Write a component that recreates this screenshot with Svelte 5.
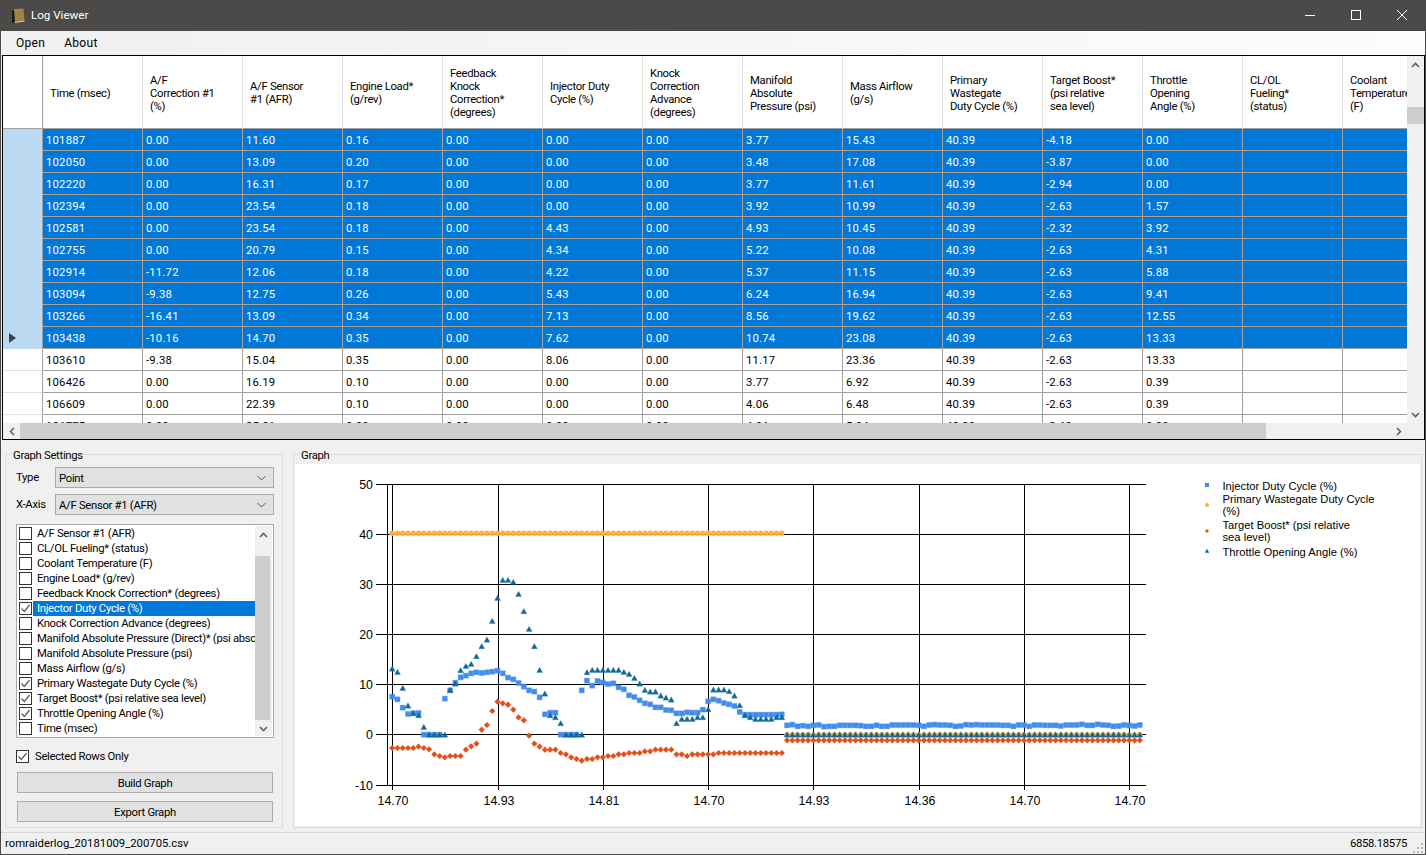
<script>
  const columns = [
    ['Time (msec)'],
    ['A/F', 'Correction #1', '(%)'],
    ['A/F Sensor', '#1 (AFR)'],
    ['Engine Load*', '(g/rev)'],
    ['Feedback', 'Knock', 'Correction*', '(degrees)'],
    ['Injector Duty', 'Cycle (%)'],
    ['Knock', 'Correction', 'Advance', '(degrees)'],
    ['Manifold', 'Absolute', 'Pressure (psi)'],
    ['Mass Airflow', '(g/s)'],
    ['Primary', 'Wastegate', 'Duty Cycle (%)'],
    ['Target Boost*', '(psi relative', 'sea level)'],
    ['Throttle', 'Opening', 'Angle (%)'],
    ['CL/OL', 'Fueling*', '(status)'],
    ['Coolant', 'Temperature', '(F)']
  ];
  const rows = [
    '101887 0.00 11.60 0.16 0.00 0.00 0.00 3.77 15.43 40.39 -4.18 0.00',
    '102050 0.00 13.09 0.20 0.00 0.00 0.00 3.48 17.08 40.39 -3.87 0.00',
    '102220 0.00 16.31 0.17 0.00 0.00 0.00 3.77 11.61 40.39 -2.94 0.00',
    '102394 0.00 23.54 0.18 0.00 0.00 0.00 3.92 10.99 40.39 -2.63 1.57',
    '102581 0.00 23.54 0.18 0.00 4.43 0.00 4.93 10.45 40.39 -2.32 3.92',
    '102755 0.00 20.79 0.15 0.00 4.34 0.00 5.22 10.08 40.39 -2.63 4.31',
    '102914 -11.72 12.06 0.18 0.00 4.22 0.00 5.37 11.15 40.39 -2.63 5.88',
    '103094 -9.38 12.75 0.26 0.00 5.43 0.00 6.24 16.94 40.39 -2.63 9.41',
    '103266 -16.41 13.09 0.34 0.00 7.13 0.00 8.56 19.62 40.39 -2.63 12.55',
    '103438 -10.16 14.70 0.35 0.00 7.62 0.00 10.74 23.08 40.39 -2.63 13.33',
    '103610 -9.38 15.04 0.35 0.00 8.06 0.00 11.17 23.36 40.39 -2.63 13.33',
    '106426 0.00 16.19 0.10 0.00 0.00 0.00 3.77 6.92 40.39 -2.63 0.39',
    '106609 0.00 22.39 0.10 0.00 0.00 0.00 4.06 6.48 40.39 -2.63 0.39',
    '106775 0.00 25.01 0.09 0.00 0.00 0.00 4.06 5.84 40.39 -2.63 0.39'
  ].map((r) => [...r.split(' '), '', '']);

  const listItems = [
    ['A/F Sensor #1 (AFR)', false],
    ['CL/OL Fueling* (status)', false],
    ['Coolant Temperature (F)', false],
    ['Engine Load* (g/rev)', false],
    ['Feedback Knock Correction* (degrees)', false],
    ['Injector Duty Cycle (%)', true, true],
    ['Knock Correction Advance (degrees)', false],
    ['Manifold Absolute Pressure (Direct)* (psi absolute)', false],
    ['Manifold Absolute Pressure (psi)', false],
    ['Mass Airflow (g/s)', false],
    ['Primary Wastegate Duty Cycle (%)', true],
    ['Target Boost* (psi relative sea level)', true],
    ['Throttle Opening Angle (%)', true],
    ['Time (msec)', false]
  ];

  const toY = (z) => 640 + z / 3;
  const toX = (i) => 393.2 + i * 5.265;
  const blueA = [170,178,203,222,220,219,284,284,284,284,176,151,128,112,107,100,97,99,97,95,92,100,113,118,129,140,151,155,172,223,218,218,284,284,284,284,151,122,137,123,127,132,130,142,148,166,171,181,190,193,202,202,210,211,220,220,217,218,218,209,184,178,182,189,193,198,216,224,224,224,224,224,224,224,223];
  const blueB = [31,29,34,32,34,31,30,35,34,34,31,31,31,31,32,34,34,31,34,34,30,30,30,30,30,31,34,30,29,30,30,31,34,33,29,30,29,30,30,30,30,31,31,34,30,30,34,30,30,31,31,31,33,30,30,30,28,31,31,28,30,31,34,33,30,31,33,30];
  const redA = [324,324,324,324,324,320,324,328,343,348,352,348,348,348,329,319,311,269,255,213,185,190,194,209,232,241,287,311,320,329,329,329,339,343,352,357,362,357,357,352,352,348,348,343,343,339,339,339,334,334,329,329,329,329,343,343,348,343,343,343,343,343,339,339,339,339,339,339,339,339,339,339,339,339,339];
  const triA = [87,97,145,198,220,227,262,285,285,285,285,151,132,92,79,73,50,20,0,-56,-125,-179,-179,-173,-137,-85,-32,20,91,162,227,233,251,285,285,285,285,98,91,91,91,91,91,91,97,103,115,132,151,156,156,168,174,180,251,238,238,238,233,233,209,150,150,150,155,168,197,227,233,238,238,238,238,233,233];

  const blue = [...blueA.map(toY), ...blueB.map((z) => 715 + z / 3)];
  const red = [...redA.map(toY), ...blueB.map(() => 740.3)];
  const tri = [...triA.map(toY), ...blueB.map(() => 735)];
  const orange = blue.map((_, i) => (i < 75 ? 533.2 : 734.6));

  const yTicks = [[50, 484], [40, 534], [30, 584], [20, 634], [10, 684], [0, 734], [-10, 785]];
  const xTicks = [[393, '14.70'], [499, '14.93'], [604, '14.81'], [709, '14.70'], [814, '14.93'], [920, '14.36'], [1025, '14.70'], [1130, '14.70']];
  const legend = [
    { mark: 'b', y: 485, lines: [[490, 'Injector Duty Cycle (%)']] },
    { mark: 'o', y: 505, lines: [[503, 'Primary Wastegate Duty Cycle'], [515, '(%)']] },
    { mark: 'r', y: 531, lines: [[529, 'Target Boost* (psi relative'], [541, 'sea level)']] },
    { mark: 't', y: 551, lines: [[556, 'Throttle Opening Angle (%)']] }
  ];
</script>

{#snippet check()}
  <svg class="tick" viewBox="0 0 11 11" width="11" height="11"><path d="M1.5 5.5 L4.3 8.5 L9.6 2" fill="none" stroke="#5a5a5a" stroke-width="1.2" /></svg>
{/snippet}

{#snippet chevron(dir)}
  <svg viewBox="0 0 9 6" width="9" height="6" class="chev">
    <path d={dir === 'up' ? 'M1 5 L4.5 1.5 L8 5' : 'M1 1 L4.5 4.5 L8 1'} fill="none" stroke="#606060" stroke-width="1.6" />
  </svg>
{/snippet}

{#snippet chevronSide(dir)}
  <svg viewBox="0 0 6 9" width="6" height="9" class="chev">
    <path d={dir === 'left' ? 'M5 1 L1.5 4.5 L5 8' : 'M1 1 L4.5 4.5 L1 8'} fill="none" stroke="#606060" stroke-width="1.6" />
  </svg>
{/snippet}

<div class="win">
  <header class="title">
    <svg class="appicon" viewBox="0 0 14 16" width="14" height="16">
      <path d="M1 3 L4 1 L4 14 L1 15 Z" fill="#1d1b18" />
      <path d="M3 1 L12.5 0.5 L13.5 12.5 L4 14 Z" fill="#a67f42" />
      <path d="M4 14 L13.5 12.5 L13.5 13.5 L4 15 Z" fill="#e4d6b8" />
    </svg>
    <span class="title-text">Log Viewer</span>
    <div class="winbtns">
      <svg viewBox="0 0 10 10" width="10" height="10"><path d="M0 5.5H10" stroke="#fff" /></svg>
      <svg viewBox="0 0 10 10" width="10" height="10"><rect x="0.5" y="0.5" width="9" height="9" fill="none" stroke="#fff" /></svg>
      <svg viewBox="0 0 10 10" width="10" height="10"><path d="M0 0L10 10M10 0L0 10" stroke="#fff" /></svg>
    </div>
  </header>

  <nav class="menu"><span>Open</span><span>About</span></nav>

  <section class="pane">
    <div class="pane-top">
      <div class="table">
        <div class="tr head">
          <div class="rh"></div>
          {#each columns as lines}
            <div class="th">
              <div>{#each lines as l}<div>{l}</div>{/each}</div>
            </div>
          {/each}
        </div>
        {#each rows as r, i}
          <div class="tr" class:sel={i < 10}>
            <div class="rh">
              {#if i === 9}<svg viewBox="0 0 7 10" width="7" height="10"><path d="M0 0L7 5L0 10Z" fill="#404040" /></svg>{/if}
            </div>
            {#each r as c}<div class="td">{c}</div>{/each}
          </div>
        {/each}
      </div>
      <div class="vscroll">
        <div class="sbtn">{@render chevron('up')}</div>
        <div class="vtrack"><div class="vthumb"></div></div>
        <div class="sbtn">{@render chevron('down')}</div>
      </div>
    </div>
    <div class="hscroll">
      <div class="hbtn">{@render chevronSide('left')}</div>
      <div class="htrack"><div class="hthumb"></div></div>
      <div class="hbtn">{@render chevronSide('right')}</div>
      <div class="corner"></div>
    </div>
  </section>

  <main class="lower">
    <section class="group settings">
      <span class="cap">Graph Settings</span>
      <div class="field">
        <span class="lab">Type</span>
        <div class="select"><span>Point</span><svg viewBox="0 0 9 6" width="9" height="6"><path d="M0.5 1L4.5 5L8.5 1" fill="none" stroke="#555" /></svg></div>
      </div>
      <div class="field">
        <span class="lab">X-Axis</span>
        <div class="select"><span>A/F Sensor #1 (AFR)</span><svg viewBox="0 0 9 6" width="9" height="6"><path d="M0.5 1L4.5 5L8.5 1" fill="none" stroke="#555" /></svg></div>
      </div>
      <div class="list">
        <div class="items">
          {#each listItems as [label, on, hi]}
            <div class="item">
              <span class="cb">{#if on}{@render check()}{/if}</span>
              <span class="it" class:hi>{label}</span>
            </div>
          {/each}
        </div>
        <div class="lscroll">
          <div class="lbtn">{@render chevron('up')}</div>
          <div class="ltrack"><div class="lthumb"></div></div>
          <div class="lbtn">{@render chevron('down')}</div>
        </div>
      </div>
      <div class="only">
        <span class="cb">{@render check()}</span>
        <span>Selected Rows Only</span>
      </div>
      <div class="btn">Build Graph</div>
      <div class="btn">Export Graph</div>
    </section>

    <section class="group graph">
      <span class="cap">Graph</span>
      <div class="plot">
        <svg viewBox="296 464 1123 362" width="1123" height="362">
          <g stroke="#000" stroke-width="1" shape-rendering="crispEdges">
            {#each yTicks as [, y]}<line x1="377" x2="1147" y1={y + 0.5} y2={y + 0.5} />{/each}
            <line x1="388.5" x2="388.5" y1="484" y2="786" />
            {#each xTicks as [x]}<line x1={x + 0.5} x2={x + 0.5} y1="484" y2="790" />{/each}
          </g>
          <g class="axis">
            {#each yTicks as [v, y]}<text x="374" y={y + 4.5} text-anchor="end">{v}</text>{/each}
            {#each xTicks as [x, t]}<text x={x + 1} y="805" text-anchor="middle">{t}</text>{/each}
          </g>
          <g class="m-o">{#each orange as y, i}<circle cx={toX(i)} cy={y} r="2.7" />{/each}</g>
          <g class="m-b">{#each blue as y, i}<rect x={toX(i) - 2.5} y={y - 2.5} width="5" height="5" />{/each}</g>
          <g class="m-r">{#each red as y, i}<path d="M{toX(i) - 3.1} {y}L{toX(i)} {y - 3.1}L{toX(i) + 3.1} {y}L{toX(i)} {y + 3.1}Z" />{/each}</g>
          <g class="m-t">{#each tri as y, i}<path d="M{toX(i)} {y - 3.2}L{toX(i) + 3} {y + 2.2}L{toX(i) - 3} {y + 2.2}Z" />{/each}</g>
          <g class="legend">
            {#each legend as e}
              {#if e.mark === 'b'}<rect x="1206" y={e.y - 2} width="4" height="4" fill="#428cee" />{/if}
              {#if e.mark === 'o'}<circle cx="1208" cy={e.y} r="2" fill="#ffaf3c" />{/if}
              {#if e.mark === 'r'}<path d="M1206 {e.y}L1208 {e.y - 2}L1210 {e.y}L1208 {e.y + 2}Z" fill="#e64e1a" />{/if}
              {#if e.mark === 't'}<path d="M1208 {e.y - 2.2}L1210.2 {e.y + 1.8}L1205.8 {e.y + 1.8}Z" fill="#0f6a96" />{/if}
              {#each e.lines as [y, t]}<text x="1223.5" {y}>{t}</text>{/each}
            {/each}
          </g>
        </svg>
      </div>
    </section>
  </main>

  <footer class="status">
    <span class="file">romraiderlog_20181009_200705.csv</span>
    <span class="val">6858.18575</span>
    <svg class="grip" viewBox="0 0 11 11" width="11" height="11">
      <g fill="#b5b5b5">
        <rect x="8" y="0" width="2" height="2" /><rect x="4" y="4" width="2" height="2" /><rect x="8" y="4" width="2" height="2" />
        <rect x="0" y="8" width="2" height="2" /><rect x="4" y="8" width="2" height="2" /><rect x="8" y="8" width="2" height="2" />
      </g>
    </svg>
  </footer>
</div>

<style>
  :global(body) { margin: 0; background: #f0f0f0; }
  .win {
    width: 1426px; height: 855px; box-sizing: border-box; overflow: hidden;
    display: flex; flex-direction: column;
    border: 1px solid #4c4a48; border-top: 0;
    background: #f0f0f0; color: #000;
    font-family: Roboto, "Liberation Sans", sans-serif; font-size: 11.3px;
    line-height: 13px; letter-spacing: -0.3px;
  }
  .title {
    height: 31px; flex: none; margin: 0 -1px; background: #4c4a48; color: #fff;
    display: flex; align-items: center; padding-left: 11px; box-sizing: border-box;
  }
  .appicon { margin-right: 6px; }
  .title-text { font-size: 11.6px; letter-spacing: 0; }
  .winbtns { margin-left: auto; display: flex; gap: 36px; margin-right: 19px; margin-top: -1px; }
  .menu {
    height: 24px; flex: none; display: flex; align-items: center; gap: 19px; padding: 0 0 0 15px; box-sizing: border-box;
    background: linear-gradient(90deg, #f0f0f0, #fcfcfc); margin-right: 0;
    font-size: 12px; letter-spacing: 0.3px;
  }
  .pane {
    height: 385px; flex: none; box-sizing: border-box; margin-left: 1px; border: 1px solid #000;
    display: flex; flex-direction: column; background: #fff; margin-right: 0;
  }
  .pane-top { flex: 1; min-height: 0; display: flex; }
  .table { flex: 1; min-width: 0; overflow: hidden; }
  .tr { display: flex; height: 22px; box-sizing: border-box; width: max-content; }
  .tr.head { height: 73px; }
  .rh {
    width: 40px; flex: none; box-sizing: border-box; border-right: 1px solid #a0a0a0; border-bottom: 1px solid #e0e0e0;
    display: flex; align-items: center; padding-left: 6px;
  }
  .head .rh { border-bottom-color: #a0a0a0; }
  .sel .rh { background: #bbdaf2; border-bottom-color: #bbdaf2; border-right-color: #a0a0a0; }
  .th {
    width: 100px; flex: none; box-sizing: border-box; display: flex; align-items: center;
    padding: 2px 0 0 7px; border-right: 1px solid #e0e0e0; border-bottom: 1px solid #a0a0a0; white-space: nowrap;
  }
  .td {
    width: 100px; flex: none; box-sizing: border-box; display: flex; align-items: center; padding: 2px 0 0 3px;
    border-right: 1px solid #a0a0a0; border-bottom: 1px solid #a0a0a0; letter-spacing: 0.2px;
  }
  .sel .td { background: #0078d7; color: #fff; border-color: #aaa49c; }
  .vscroll { width: 17px; flex: none; background: #f0f0f0; display: flex; flex-direction: column; }
  .sbtn { height: 17px; flex: none; display: flex; align-items: center; justify-content: center; }
  .vtrack { flex: 1; padding-top: 34px; }
  .vthumb { height: 17px; background: #cdcdcd; }
  .hscroll { height: 16px; flex: none; display: flex; background: #f0f0f0; }
  .hbtn { width: 17px; flex: none; display: flex; align-items: center; justify-content: center; }
  .htrack { flex: 1; }
  .hthumb { width: 1246px; height: 16px; background: #cdcdcd; }
  .corner { width: 17px; flex: none; background: #f0f0f0; }
  .chev { display: block; }

  .lower { flex: none; height: 388px; box-sizing: border-box; display: flex; padding: 14px 3px 0 4px; gap: 10px; }
  .group { position: relative; box-sizing: border-box; height: 374px; border: 1px solid #dcdcdc; }
  .cap { position: absolute; left: 6px; top: -6px; background: #f0f0f0; padding: 0 1px; }
  .settings { width: 278px; flex: none; padding: 12px 7px 0 10px; }
  .field { display: flex; align-items: center; height: 21px; margin-bottom: 6px; }
  .lab { width: 39px; flex: none; }
  .select {
    width: 219px; height: 21px; box-sizing: border-box; background: #e1e1e1; border: 1px solid #a9a9a9;
    display: flex; align-items: center; justify-content: space-between; padding: 1px 7px 0 3px;
  }
  .list {
    width: 258px; height: 214px; margin-top: 9px; box-sizing: border-box; background: #fff; border: 1px solid #a9a9a9;
    display: flex; padding: 1px 1px 1px 2px;
  }
  .items { width: 236px; flex: none; overflow: hidden; }
  .item { height: 15px; display: flex; align-items: center; white-space: nowrap; }
  .cb {
    width: 13px; height: 13px; flex: none; box-sizing: border-box; border: 1px solid #333; background: #fff;
    display: flex; align-items: center; justify-content: center;
  }
  .tick { display: block; }
  .it { flex: 1; margin-left: 1px; height: 15px; line-height: 15px; padding-left: 4px; overflow: hidden; }
  .it.hi { background: #0078d7; color: #fff; }
  .lscroll { width: 17px; flex: none; display: flex; flex-direction: column; background: #f0f0f0; }
  .lbtn { height: 17px; flex: none; display: flex; align-items: center; justify-content: center; }
  .ltrack { flex: 1; padding-top: 13px; }
  .lthumb { height: 164px; width: 15px; background: #cdcdcd; }
  .only { display: flex; align-items: center; gap: 6px; height: 13px; margin-top: 12px; }
  .btn {
    margin: 9px 0 0 1px; width: 256px; height: 21px; box-sizing: border-box; border: 1px solid #adadad; background: #e1e1e1;
    display: flex; align-items: center; justify-content: center; padding-top: 1px;
  }
  .btn + .btn { margin-top: 8px; }
  .graph { flex: 1; min-width: 0; padding: 9px 1px 0 1px; }
  .plot { background: #fff; height: 362px; }
  .plot svg { display: block; }
  .axis text { font: 12.4px "Liberation Sans", Arial, sans-serif; fill: #000; letter-spacing: 0; }
  .legend text { font: 11.2px "Liberation Sans", Arial, sans-serif; fill: #000; letter-spacing: 0; }
  .m-o { fill: #ffaf3c; }
  .m-b { fill: #428cee; stroke: rgba(66, 140, 238, 0.35); stroke-width: 1; }
  .m-r { fill: #e64e1a; }
  .m-t { fill: #0f6a96; stroke: rgba(15, 106, 150, 0.2); stroke-width: 1; }
  .status {
    flex: 1; min-height: 0; box-sizing: border-box; border-top: 1px solid #d7d7d7; margin: 4px 0 0; display: flex; align-items: center;
    padding: 0 1px 0 4px;
  }
  .file { letter-spacing: 0; }
  .val { margin-left: auto; margin-right: 6px; }
  .grip { margin-top: 9px; }
</style>
